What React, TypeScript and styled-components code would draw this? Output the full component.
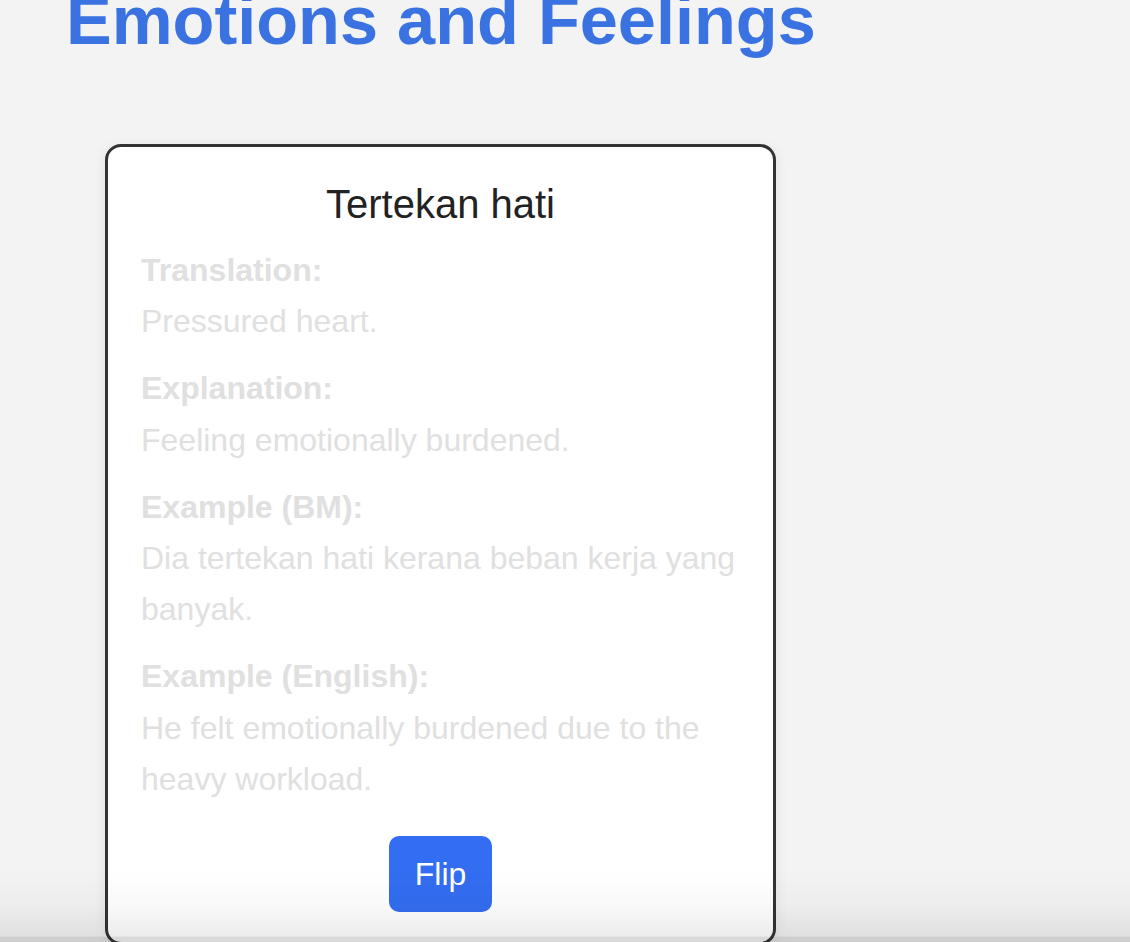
import React from "react";
import styled, { createGlobalStyle } from "styled-components";

const GlobalStyle = createGlobalStyle`
  html, body {
    margin: 0;
    padding: 0;
    background: #f3f3f3;
    font-family: "Liberation Sans", Arial, sans-serif;
  }
  * { box-sizing: border-box; }
`;

const Page = styled.main`
  padding: 0 0 0 61px;
  display: flex;
  flex-direction: column;
  align-items: flex-start;
`;

const Heading = styled.h1`
  margin: -18px 0 0 5px;
  font-size: 68.5px;
  line-height: 78px;
  font-weight: 700;
  color: #3a73e1;
`;

const Card = styled.section`
  margin: 84px 0 0 44px;
  width: 671px;
  background: #fff;
  border: 3px solid #333;
  border-radius: 16px;
  padding: 35px 33px 30px;
  box-shadow: 0 4px 14px rgba(0, 0, 0, 0.08);
  display: flex;
  flex-direction: column;
`;

const CardTitle = styled.h2`
  margin: 0 0 18px;
  font-size: 40px;
  line-height: 45px;
  font-weight: 400;
  text-align: center;
  color: #222;
`;

const Section = styled.div`
  display: flex;
  flex-direction: column;
  & + & {
    margin-top: 16px;
  }
`;

const Label = styled.strong`
  font-size: 32px;
  line-height: 51.2px;
  font-weight: 700;
  color: #e0e0e0;
`;

const Text = styled.p`
  margin: 0;
  font-size: 32px;
  line-height: 51.2px;
  color: #e0e0e0;
`;

const ButtonRow = styled.div`
  display: flex;
  justify-content: center;
  margin-top: 31px;
`;

const FlipButton = styled.button`
  height: 76px;
  padding: 0 26px;
  border: none;
  border-radius: 10px;
  background: #336df1;
  color: #fff;
  font-family: "Liberation Sans", Arial, sans-serif;
  font-size: 32px;
  cursor: pointer;
`;

const BottomFade = styled.div`
  position: fixed;
  left: 0;
  right: 0;
  bottom: 0;
  height: 72px;
  pointer-events: none;
  background: linear-gradient(
    to bottom,
    rgba(0, 0, 0, 0) 0%,
    rgba(0, 0, 0, 0.025) 50%,
    rgba(0, 0, 0, 0.075) 92%,
    rgba(0, 0, 0, 0.15) 93%,
    rgba(0, 0, 0, 0.15) 100%
  );
`;

const entries = [
  { label: "Translation:", text: "Pressured heart." },
  { label: "Explanation:", text: "Feeling emotionally burdened." },
  { label: "Example (BM):", text: "Dia tertekan hati kerana beban kerja yang banyak." },
  { label: "Example (English):", text: "He felt emotionally burdened due to the heavy workload." },
];

export default function App() {
  return (
    <>
      <GlobalStyle />
      <Page>
        <Heading>Emotions and Feelings</Heading>
        <Card>
          <CardTitle>Tertekan hati</CardTitle>
          {entries.map((e) => (
            <Section key={e.label}>
              <Label>{e.label}</Label>
              <Text>{e.text}</Text>
            </Section>
          ))}
          <ButtonRow>
            <FlipButton type="button">Flip</FlipButton>
          </ButtonRow>
        </Card>
      </Page>
      <BottomFade />
    </>
  );
}
